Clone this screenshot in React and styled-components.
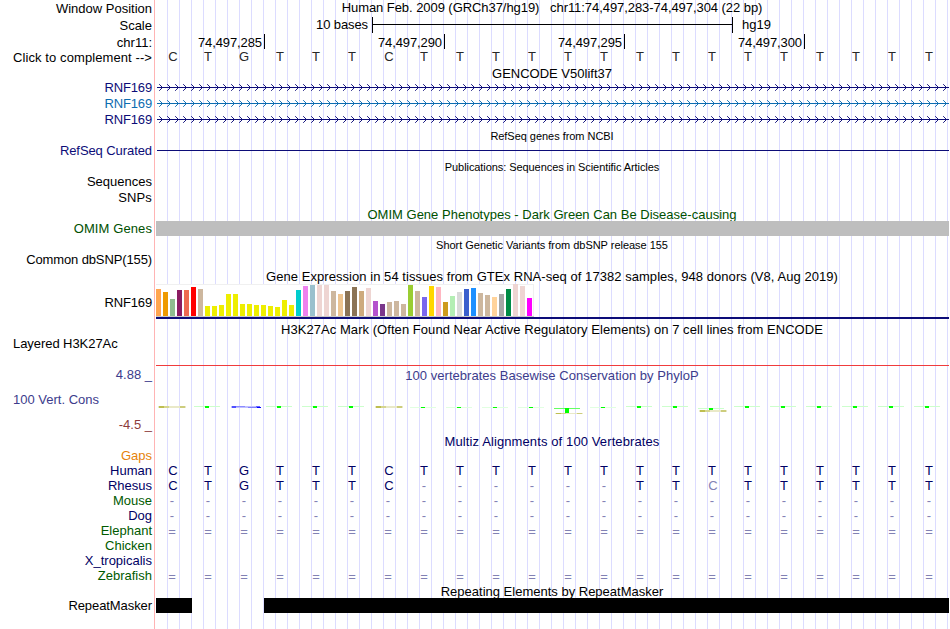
import React from 'react';

import styled, { createGlobalStyle } from 'styled-components';

const colors = {
  navy: '#0c0c78',
  transcript: '#0c6cb0',
  align: '#000064',
  green: '#005000',
  speciesGreen: '#005a00',
  orange: '#e6820a',
  consPos: '#3c3c8c',
  consNeg: '#8c3c3c',
  mismatch: '#8282b4',
};

const GlobalStyle = createGlobalStyle`
  body {
    margin: 0;
    background: #fff;
    overflow: hidden;
  }
`;

// Guide lines every 12px, with the red divider between labels and tracks
const Browser = styled.div`
  width: 950px;
  height: 629px;
  overflow: hidden;
  font-family: 'Liberation Sans', Arial, sans-serif;
  font-size: 13px;
  line-height: 15px;
  color: #000;
  background-color: #fff;
  background-image: linear-gradient(#ffb4b4, #ffb4b4),
    linear-gradient(#fff, #fff),
    linear-gradient(to right, #dcdcff 1px, transparent 1px);
  background-position: 154px 0, 0 0, 11px 0;
  background-size: 1px 100%, 156px 100%, 12px 100%;
  background-repeat: no-repeat, no-repeat, repeat;
`;

const Row = styled.div`
  display: grid;
  grid-template-columns: 155px 795px;
  height: ${(props) => props.$height}px;
`;

const Label = styled.div`
  box-sizing: border-box;
  padding: ${(props) => props.$top || 0}px 3px 0 13px;
  text-align: ${(props) => (props.$left ? 'left' : 'right')};
  color: ${(props) => props.$color || '#000'};
  letter-spacing: ${(props) => props.$spacing || 0}px;
  white-space: pre;
`;

const Title = styled.div`
  width: 794px;
  padding-top: ${(props) => props.$top || 0}px;
  text-align: center;
  white-space: pre;
  color: ${(props) => props.$color || '#000'};
  letter-spacing: ${(props) => props.$spacing || 0}px;
`;

const SmallTitle = styled(Title)`
  font-size: 11px;
  line-height: 12px;
`;

const ScaleTrack = styled.div`
  display: flex;
`;

const ScaleText = styled.div`
  box-sizing: border-box;
  width: 217px;
  padding-right: 4px;
  text-align: right;
  letter-spacing: -0.1px;
`;

const ScaleBar = styled.div`
  box-sizing: border-box;
  width: 361px;
  height: 16px;
  padding-top: 7px;
  border: solid #000;
  border-width: 0 1px;

  &::before {
    content: '';
    display: block;
    height: 1px;
    background: #000;
  }
`;

const Assembly = styled.div`
  margin-left: 9px;
`;

const Positions = styled.div`
  display: flex;
`;

const Position = styled.div`
  box-sizing: border-box;
  width: ${(props) => props.$width}px;
  height: 15px;
  padding: 1px 2px 0 0;
  border-right: 1px solid #000;
  text-align: right;
  letter-spacing: -0.1px;
`;

const BaseRow = styled.div`
  display: grid;
  grid-template-columns: repeat(22, 36px);
  width: 792px;
  padding-top: ${(props) => props.$top || 0}px;
  color: ${(props) => props.$color};
`;

const Base = styled.span`
  padding-right: ${(props) => (props.$wide ? 0 : 2)}px;
  text-align: center;
  color: ${(props) => (props.$dim ? colors.mismatch : 'inherit')};

  &:last-child {
    padding-right: 0;
  }
`;

const Drawing = styled.svg`
  display: block;
  overflow: visible;
`;

const SolidLine = styled.div`
  height: 1px;
  margin: 7px 1px 0 2px;
  background: ${colors.navy};
`;

const Block = styled.div`
  width: ${(props) => props.$width}px;
  height: 15px;
  margin-left: ${(props) => props.$gap}px;
  background: ${(props) => props.$color};
`;

const BlockRow = styled.div`
  display: flex;
`;

const Expression = styled.div`
  margin-left: 1px;
`;

const BarPanel = styled.div`
  box-sizing: border-box;
  display: flex;
  align-items: flex-end;
  gap: 2px;
  width: 378px;
  height: 33px;
  background: #fff;
  border-bottom: 1px solid #c8c8c8;
  box-shadow: inset 0 1px #f0f0f0, inset -1px 0 #f0f0f0;
`;

const Bar = styled.div`
  flex: 0 0 5px;
  height: ${(props) => props.$height}px;
  background: ${(props) => props.$color};
`;

const GeneModel = styled.div`
  height: 2px;
  width: 793px;
  background: ${colors.navy};
`;

const SignalTrack = styled.div`
  box-sizing: border-box;
  margin-left: 1px;
  width: 793px;
  border-bottom: 1px solid #f03c3c;
`;

const positions = [
  { text: '74,497,285', width: 110 },
  { text: '74,497,290', width: 180 },
  { text: '74,497,295', width: 180 },
  { text: '74,497,300', width: 180 },
];

const sequence = 'CTGTTTCTTTTTTTTTTTTTTT';
const dashes = '-'.repeat(22);
const doubles = '='.repeat(22);

const species = [
  { name: 'Gaps', color: colors.orange },
  { name: 'Human', color: colors.align, bases: sequence },
  { name: 'Rhesus', color: colors.align, bases: 'CTGTTTC------TTcTTTTTT' },
  { name: 'Mouse', color: colors.speciesGreen, bases: dashes },
  { name: 'Dog', color: colors.align, bases: dashes },
  { name: 'Elephant', color: colors.speciesGreen, bases: doubles, top: 1 },
  { name: 'Chicken', color: colors.speciesGreen },
  { name: 'X_tropicalis', color: colors.align },
  { name: 'Zebrafish', color: colors.speciesGreen, bases: doubles, top: 1 },
];

// GTEx tissues: [bar height, tissue color]
const tissues = [
  [27, '#ffa54f'], [24, '#ee9a00'], [17, '#8fbc8f'], [26, '#8b1c62'],
  [26, '#ee6a50'], [29, '#ff0000'], [27, '#cdb79e'], [10, '#eeee00'],
  [10, '#eeee00'], [11, '#eeee00'], [22, '#eeee00'], [22, '#eeee00'],
  [12, '#eeee00'], [12, '#eeee00'], [11, '#eeee00'], [11, '#eeee00'],
  [10, '#eeee00'], [9, '#eeee00'], [16, '#eeee00'], [11, '#eeee00'],
  [26, '#00cdcd'], [30, '#ee82ee'], [31, '#9ac0cd'], [31, '#eed5d2'],
  [31, '#eed5d2'], [25, '#cdb79e'], [22, '#eec591'], [25, '#8b7355'],
  [29, '#8b7355'], [25, '#cdaa7d'], [28, '#eed5d2'], [15, '#b452cd'],
  [12, '#7a378b'], [14, '#cdb79e'], [15, '#cdb79e'], [12, '#cdb79e'],
  [31, '#9acd32'], [25, '#cdb79e'], [19, '#7a67ee'], [30, '#ffd700'],
  [29, '#ffb6c1'], [14, '#cd9b1d'], [20, '#b4eeb4'], [24, '#d9d9d9'],
  [27, '#3a5fcd'], [28, '#1e90ff'], [23, '#cdb79e'], [21, '#cdb79e'],
  [19, '#ffd39b'], [22, '#a6a6a6'], [27, '#008b45'], [32, '#eed5d2'],
  [30, '#eed5d2'], [18, '#ff00ff'],
];

const chevrons = Array.from({ length: 99 }, (_, i) => 4.2 + i * 8)
  .map((x) => `M${x} 4.2l3.3 3.3l-3.3 3.3`)
  .join('');

const Bases = ({ text, color, top }) => (
  <BaseRow $color={color} $top={top}>
    {text.split('').map((base, i) => (
      <Base key={i} $dim={/[-=c]/.test(base)} $wide={/c/i.test(base)}>
        {base.toUpperCase()}
      </Base>
    ))}
  </BaseRow>
);

const Transcript = ({ color, line }) => (
  <Row $height={16}>
    <Label $color={color} $spacing={-0.15}>
      RNF169
    </Label>
    <Drawing width='794' height='16'>
      <path d={chevrons} fill='none' stroke={line} strokeWidth='0.95' />
      <rect x='2' y='7' width='792' height='1' fill={line} />
    </Drawing>
  </Row>
);

// Flattened logo letters, x is the left edge of the base
const FlatC = ({ x, y, height = 2 }) => (
  <g>
    <rect x={x} y={y} width='28' height={height} fill='#e9e9c8' />
    <rect x={x + 1} y={y} width='5' height={height} fill='#bebe50' />
    <rect x={x + 6} y={y} width='5' height={height} fill='#d6d690' />
    <rect x={x + 22} y={y} width='5' height={height} fill='#cdcd7d' />
  </g>
);

const FlatG = ({ x, y }) => (
  <g>
    <rect x={x} y={y} width='26' height='2' fill='#c0c0ff' />
    <rect x={x + 1} y={y} width='4' height='2' fill='#5050ff' />
    <rect x={x + 5} y={y} width='9' height='1' fill='#8c8cff' />
    <rect x={x + 17} y={y + 1} width='9' height='1' fill='#8080ff' />
    <rect x={x + 25} y={y} width='4' height='1' fill='#6464ff' />
    <rect x={x + 26} y={y + 1} width='4' height='1' fill='#0000ff' />
  </g>
);

const FlatT = ({ x, y, bar = '#ccffcc', stem = 2 }) => (
  <g>
    <rect x={x + 3} y={y} width='26' height='1' fill={bar} />
    <rect x={x + 14} y={y} width='4' height={stem} fill='#00ff00' />
  </g>
);

const Conservation = () => (
  <Drawing width='794' height='32'>
    <FlatC x={3} y={24} />
    <FlatG x={76} y={24} />
    <FlatC x={220} y={24} />
    {[1, 3, 4, 5, 13, 14, 16, 17, 18, 19, 20, 21].map((i) => (
      <FlatT key={i} x={i * 36} y={24} />
    ))}
    {[7, 8, 9, 10, 12].map((i) => (
      <FlatT key={i} x={i * 36} y={25} bar='#e1ffe1' stem={1} />
    ))}
    <FlatT x={396} y={26} bar='#64ff64' stem={5} />
    <FlatC x={400} y={31} height={1} />
    <FlatT x={540} y={26} />
    <FlatC x={544} y={28} />
  </Drawing>
);

const App = () => {
  return (
    <>
      <GlobalStyle />
      <Browser>
        <Row $height={17}>
          <Label $top={1}>Window Position</Label>
          <Title $spacing={-0.06}>
            {'Human Feb. 2009 (GRCh37/hg19)   chr11:74,497,283-74,497,304 (22 bp)'}
          </Title>
        </Row>
        <Row $height={17}>
          <Label $top={1}>Scale</Label>
          <ScaleTrack>
            <ScaleText>10 bases</ScaleText>
            <ScaleBar />
            <Assembly>hg19</Assembly>
          </ScaleTrack>
        </Row>
        <Row $height={15}>
          <Label $top={1}>chr11:</Label>
          <Positions>
            {positions.map(({ text, width }) => (
              <Position key={text} $width={width}>
                {text}
              </Position>
            ))}
          </Positions>
        </Row>
        <Row $height={16}>
          <Label $top={1} $spacing={0.09}>
            {'Click to complement -->'}
          </Label>
          <Bases text={sequence} color='#282828' />
        </Row>

        <Row $height={15}>
          <Label />
          <Title $top={1}>GENCODE V50lift37</Title>
        </Row>
        <Transcript color={colors.navy} line={colors.navy} />
        <Transcript color={colors.transcript} line={colors.transcript} />
        <Transcript color={colors.navy} line={colors.navy} />

        <Row $height={15}>
          <Label />
          <SmallTitle $top={2} $spacing={-0.04}>
            RefSeq genes from NCBI
          </SmallTitle>
        </Row>
        <Row $height={16}>
          <Label $color={colors.navy} $spacing={-0.08}>
            RefSeq Curated
          </Label>
          <SolidLine />
        </Row>

        <Row $height={15}>
          <Label />
          <SmallTitle $top={2} $spacing={-0.07}>
            Publications: Sequences in Scientific Articles
          </SmallTitle>
        </Row>
        <Row $height={16}>
          <Label>Sequences</Label>
        </Row>
        <Row $height={16}>
          <Label $spacing={0.15}>SNPs</Label>
        </Row>

        <Row $height={15}>
          <Label />
          <Title $top={1} $color={colors.green} $spacing={0.01}>
            OMIM Gene Phenotypes - Dark Green Can Be Disease-causing
          </Title>
        </Row>
        <Row $height={15}>
          <Label $color={colors.green} $spacing={0.1}>
            OMIM Genes
          </Label>
          <Block $gap={1} $width={793} $color='#bebebe' />
        </Row>

        <Row $height={16}>
          <Label />
          <SmallTitle $top={3} $spacing={-0.03}>
            Short Genetic Variants from dbSNP release 155
          </SmallTitle>
        </Row>
        <Row $height={16}>
          <Label $spacing={-0.12}>Common dbSNP(155)</Label>
        </Row>

        <Row $height={16}>
          <Label />
          <Title $top={1} $spacing={0.05}>
            Gene Expression in 54 tissues from GTEx RNA-seq of 17382 samples,
            {' 948 donors (V8, Aug 2019)'}
          </Title>
        </Row>
        <Row $height={37}>
          <Label $top={11} $spacing={-0.15}>
            RNF169
          </Label>
          <Expression>
            <BarPanel>
              {tissues.map(([height, color], i) => (
                <Bar key={i} $height={height} $color={color} />
              ))}
            </BarPanel>
            <GeneModel />
          </Expression>
        </Row>

        <Row $height={15}>
          <Label />
          <Title $top={1} $spacing={0.05}>
            H3K27Ac Mark (Often Found Near Active Regulatory Elements) on 7 cell
            {' lines from ENCODE'}
          </Title>
        </Row>
        <Row $height={30}>
          <Label $left $spacing={-0.06}>
            Layered H3K27Ac
          </Label>
          <SignalTrack />
        </Row>

        <Row $height={16}>
          <Label $top={1} $color={colors.consPos}>
            4.88 _
          </Label>
          <Title $top={2} $color={colors.consPos} $spacing={0.03}>
            100 vertebrates Basewise Conservation by PhyloP
          </Title>
        </Row>
        <Row $height={32}>
          <Label $left $top={10} $color={colors.consPos}>
            100 Vert. Cons
          </Label>
          <Conservation />
        </Row>
        <Row $height={20}>
          <Label $top={3} $color={colors.consNeg}>
            -4.5 _
          </Label>
        </Row>

        <Row $height={14}>
          <Label />
          <Title $color={colors.align} $spacing={0.11}>
            Multiz Alignments of 100 Vertebrates
          </Title>
        </Row>
        {species.map(({ name, color, bases, top }) => (
          <Row key={name} $height={15}>
            <Label $color={color}>{name}</Label>
            {bases && <Bases text={bases} color={colors.align} top={top} />}
          </Row>
        ))}

        <Row $height={15}>
          <Label />
          <Title $top={1}>Repeating Elements by RepeatMasker</Title>
        </Row>
        <Row $height={31}>
          <Label $spacing={-0.08}>RepeatMasker</Label>
          <BlockRow>
            <Block $gap={1} $width={36} $color='#000' />
            <Block $gap={72} $width={685} $color='#000' />
          </BlockRow>
        </Row>
      </Browser>
    </>
  );
};

export default App;
